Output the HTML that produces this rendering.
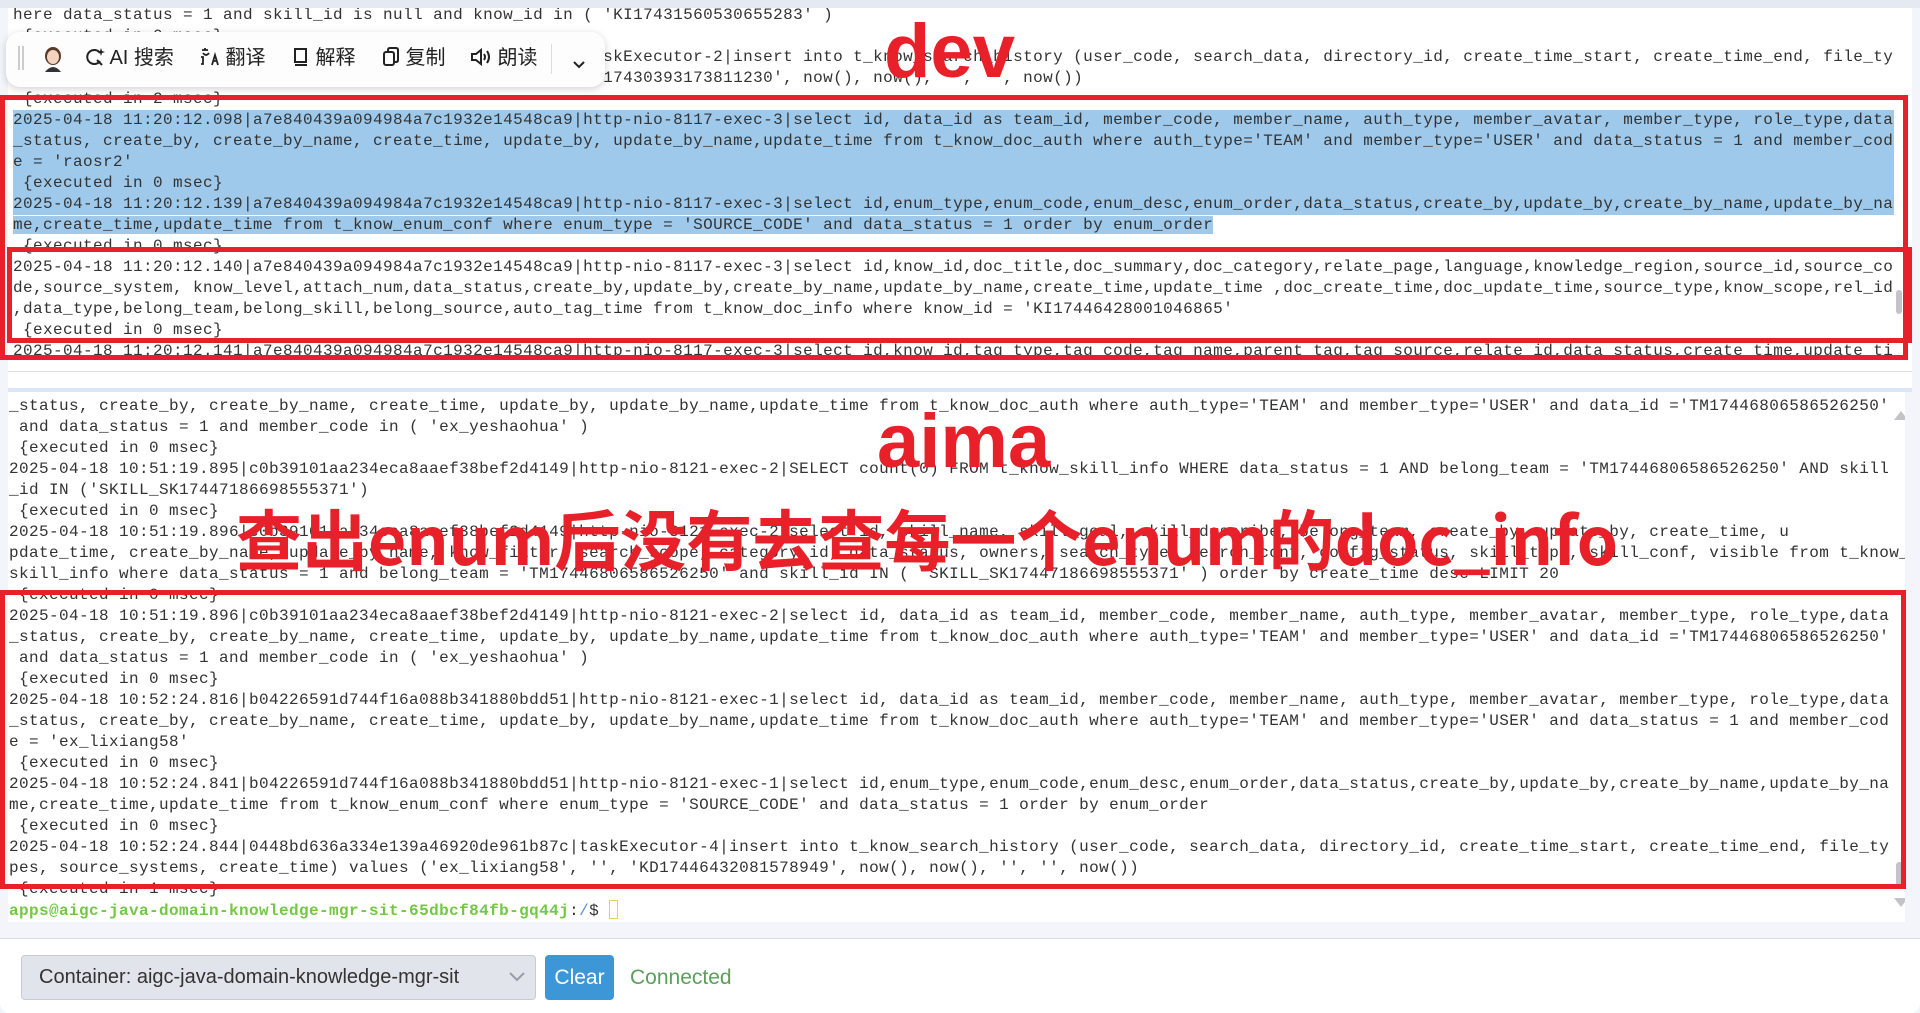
<!DOCTYPE html>
<html><head><meta charset="utf-8">
<style>
*{margin:0;padding:0;box-sizing:border-box}
body{width:1920px;height:1013px;overflow:hidden;background:#f4f5fa;position:relative;font-family:"Liberation Sans","Noto Sans CJK SC",sans-serif}
.pane{position:absolute;background:#fff;overflow:hidden}
.ln{font-family:"Liberation Mono",monospace;font-size:16px;letter-spacing:0.4px;line-height:21px;height:21px;white-space:pre;color:#333}
.hl{background:#9ec9ea}
.box{position:absolute;border:5px solid #e8202a}
.red{position:absolute;color:#e8202a;font-weight:bold;font-family:"Liberation Sans","Noto Sans CJK SC",sans-serif;white-space:nowrap}
.tb{position:absolute;left:6px;top:32px;width:599px;height:55px;background:#fdfdfd;border-radius:14px;box-shadow:0 2px 8px rgba(0,0,0,.18);font-size:20px;color:#222}
.tb span{position:absolute;top:14px;line-height:24px;white-space:nowrap}
</style></head><body>
<div style="position:absolute;left:0;top:0;width:1920px;height:8px;background:#e4e9f2"></div>
<div class="pane" style="left:8px;top:8px;width:1904px;height:380px;padding-left:5px">
<div style="margin-top:-3px">
<div class="ln">here data_status = 1 and skill_id is null and know_id in ( 'KI17431560530655283' )</div>
<div class="ln"> {executed in 0 msec}</div>
<div class="ln">2025-04-18 11:20:12.087|a7e840439a094984a7c1932e14548ca9|taskExecutor-2|insert into t_know_search_history (user_code, search_data, directory_id, create_time_start, create_time_end, file_ty</div>
<div class="ln">pes, source_systems, create_time) values ('raosr2', '', 'KD17430393173811230', now(), now(), '', '', now())</div>
<div class="ln"> {executed in 2 msec}</div>
<div class="ln hl" style="width:1881px">2025-04-18 11:20:12.098|a7e840439a094984a7c1932e14548ca9|http-nio-8117-exec-3|select id, data_id as team_id, member_code, member_name, auth_type, member_avatar, member_type, role_type,data</div>
<div class="ln hl" style="width:1881px">_status, create_by, create_by_name, create_time, update_by, update_by_name,update_time from t_know_doc_auth where auth_type='TEAM' and member_type='USER' and data_status = 1 and member_cod</div>
<div class="ln hl" style="width:1881px">e = 'raosr2'</div>
<div class="ln hl" style="width:1881px"> {executed in 0 msec}</div>
<div class="ln hl" style="width:1881px">2025-04-18 11:20:12.139|a7e840439a094984a7c1932e14548ca9|http-nio-8117-exec-3|select id,enum_type,enum_code,enum_desc,enum_order,data_status,create_by,update_by,create_by_name,update_by_na</div>
<div class="ln"><span class="hl">me,create_time,update_time from t_know_enum_conf where enum_type = 'SOURCE_CODE' and data_status = 1 order by enum_order</span></div>
<div class="ln"> {executed in 0 msec}</div>
<div class="ln">2025-04-18 11:20:12.140|a7e840439a094984a7c1932e14548ca9|http-nio-8117-exec-3|select id,know_id,doc_title,doc_summary,doc_category,relate_page,language,knowledge_region,source_id,source_co</div>
<div class="ln">de,source_system, know_level,attach_num,data_status,create_by,update_by,create_by_name,update_by_name,create_time,update_time ,doc_create_time,doc_update_time,source_type,know_scope,rel_id</div>
<div class="ln">,data_type,belong_team,belong_skill,belong_source,auto_tag_time from t_know_doc_info where know_id = 'KI17446428001046865'</div>
<div class="ln"> {executed in 0 msec}</div>
<div class="ln">2025-04-18 11:20:12.141|a7e840439a094984a7c1932e14548ca9|http-nio-8117-exec-3|select id,know_id,tag_type,tag_code,tag_name,parent_tag,tag_source,relate_id,data_status,create_time,update_ti</div>
</div>
<div style="position:absolute;left:0;top:363px;width:1904px;height:17px;background:#fff;border-top:1px solid #dde0e8"></div>
<div style="position:absolute;left:1888px;top:282px;width:6px;height:24px;background:#c4c4c8;border-radius:3px"></div>
</div>
<div style="position:absolute;left:8px;top:388px;width:1904px;height:4px;background:#dbe6f6"></div>

<div class="pane" style="left:8px;top:392px;width:1897px;height:530px;padding-left:1px">
<div style="margin-top:4px">
<div class="ln">_status, create_by, create_by_name, create_time, update_by, update_by_name,update_time from t_know_doc_auth where auth_type='TEAM' and member_type='USER' and data_id ='TM17446806586526250'</div>
<div class="ln"> and data_status = 1 and member_code in ( 'ex_yeshaohua' )</div>
<div class="ln"> {executed in 0 msec}</div>
<div class="ln">2025-04-18 10:51:19.895|c0b39101aa234eca8aaef38bef2d4149|http-nio-8121-exec-2|SELECT count(0) FROM t_know_skill_info WHERE data_status = 1 AND belong_team = 'TM17446806586526250' AND skill</div>
<div class="ln">_id IN ('SKILL_SK17447186698555371')</div>
<div class="ln"> {executed in 0 msec}</div>
<div class="ln">2025-04-18 10:51:19.896|c0b39101aa234eca8aaef38bef2d4149|http-nio-8121-exec-2|select id, skill_name, skill_goal, skill_describe, belong_team, create_by, update_by, create_time, u</div>
<div class="ln">pdate_time, create_by_name, update_by_name, know_filter, search_scope, category_id, data_status, owners, search_type, search_conf, config_status, skill_type, skill_conf, visible from t_know_</div>
<div class="ln">skill_info where data_status = 1 and belong_team = 'TM17446806586526250' and skill_id IN ( 'SKILL_SK17447186698555371' ) order by create_time desc LIMIT 20</div>
<div class="ln"> {executed in 0 msec}</div>
<div class="ln">2025-04-18 10:51:19.896|c0b39101aa234eca8aaef38bef2d4149|http-nio-8121-exec-2|select id, data_id as team_id, member_code, member_name, auth_type, member_avatar, member_type, role_type,data</div>
<div class="ln">_status, create_by, create_by_name, create_time, update_by, update_by_name,update_time from t_know_doc_auth where auth_type='TEAM' and member_type='USER' and data_id ='TM17446806586526250'</div>
<div class="ln"> and data_status = 1 and member_code in ( 'ex_yeshaohua' )</div>
<div class="ln"> {executed in 0 msec}</div>
<div class="ln">2025-04-18 10:52:24.816|b04226591d744f16a088b341880bdd51|http-nio-8121-exec-1|select id, data_id as team_id, member_code, member_name, auth_type, member_avatar, member_type, role_type,data</div>
<div class="ln">_status, create_by, create_by_name, create_time, update_by, update_by_name,update_time from t_know_doc_auth where auth_type='TEAM' and member_type='USER' and data_status = 1 and member_cod</div>
<div class="ln">e = 'ex_lixiang58'</div>
<div class="ln"> {executed in 0 msec}</div>
<div class="ln">2025-04-18 10:52:24.841|b04226591d744f16a088b341880bdd51|http-nio-8121-exec-1|select id,enum_type,enum_code,enum_desc,enum_order,data_status,create_by,update_by,create_by_name,update_by_na</div>
<div class="ln">me,create_time,update_time from t_know_enum_conf where enum_type = 'SOURCE_CODE' and data_status = 1 order by enum_order</div>
<div class="ln"> {executed in 0 msec}</div>
<div class="ln">2025-04-18 10:52:24.844|0448bd636a334e139a46920de961b87c|taskExecutor-4|insert into t_know_search_history (user_code, search_data, directory_id, create_time_start, create_time_end, file_ty</div>
<div class="ln">pes, source_systems, create_time) values ('ex_lixiang58', '', 'KD17446432081578949', now(), now(), '', '', now())</div>
<div class="ln"> {executed in 1 msec}</div>
<div class="ln"><span style="color:#72c842;font-weight:bold">apps@aigc-java-domain-knowledge-mgr-sit-65dbcf84fb-gq44j</span>:<span style="color:#5b8fd6">/</span>$ <span style="display:inline-block;width:9px;height:19px;border:1.5px solid #e8d060;vertical-align:-4px"></span></div>
</div>
<svg style="position:absolute;left:1886px;top:18px" width="14" height="10"><path d="M0 10 L7 1 L14 10 Z" fill="#c4c4c8"/></svg>
<div style="position:absolute;left:1888px;top:470px;width:7px;height:24px;background:#c4c4c8;border-radius:3px"></div>
<svg style="position:absolute;left:1886px;top:506px" width="14" height="10"><path d="M0 0 L7 9 L14 0 Z" fill="#c4c4c8"/></svg>
</div>

<div style="position:absolute;left:0;top:938px;width:1920px;height:75px;background:#fff;border-top:1px solid #dcdde3;border-radius:0 0 10px 10px"></div>
<div style="position:absolute;left:21px;top:955px;width:515px;height:45px;background:#e2e4ec;border:1px solid #c8cad4;border-radius:4px;font-size:20px;color:#333;line-height:43px;padding-left:17px">Container: aigc-java-domain-knowledge-mgr-sit
<svg style="position:absolute;left:486px;top:15px" width="18" height="12"><path d="M2 2 L9 9 L16 2" stroke="#9a9ca6" stroke-width="2" fill="none"/></svg></div>
<div style="position:absolute;left:545px;top:955px;width:69px;height:45px;background:#3d97d6;border-radius:4px;color:#fff;font-size:21px;line-height:45px;text-align:center">Clear</div>
<div style="position:absolute;left:630px;top:955px;height:45px;line-height:45px;font-size:21px;color:#5c9e5c">Connected</div>

<div class="box" style="left:0;top:95px;width:1908px;height:265px"></div>
<div class="box" style="left:7px;top:247px;width:1905px;height:96px"></div>
<div class="box" style="left:0;top:590px;width:1906px;height:299px"></div>

<div class="tb">
<span style="left:12px;top:14px;width:6px;height:24px;border-left:2px solid #ccc;border-right:2px solid #ccc"></span>
<span style="left:37px;top:14px;width:20px;height:26px">
<svg width="20" height="26" viewBox="0 0 20 26"><ellipse cx="10" cy="10" rx="8" ry="9" fill="#5a3a2a"/><ellipse cx="10" cy="11" rx="6" ry="7" fill="#f4d4c0"/><path d="M2 26 Q10 16 18 26Z" fill="#333"/></svg></span>
<span style="left:79px"><svg width="20" height="20" viewBox="0 0 20 20" style="vertical-align:-3px"><path d="M15 6 A7 7 0 1 0 15 14" stroke="#222" stroke-width="2" fill="none"/><path d="M12 13 L17 18" stroke="#222" stroke-width="2"/><path d="M16 1 L17 4 L20 5 L17 6 L16 9 L15 6 L12 5 L15 4Z" fill="#222"/></svg> AI 搜索</span>
<span style="left:194px"><svg width="20" height="20" viewBox="0 0 20 20" style="vertical-align:-3px"><path d="M2 3 L8 3 M5 3 L5 1 M3 6 Q6 10 9 6 M1 10 L3 10 L3 17 L1 17 M12 18 L15 8 L18 18 M13 14 L17 14" stroke="#222" stroke-width="1.8" fill="none"/></svg> 翻译</span>
<span style="left:286px"><svg width="18" height="20" viewBox="0 0 18 20" style="vertical-align:-3px"><rect x="3" y="2" width="11" height="13" stroke="#222" stroke-width="2" fill="none"/><path d="M3 18 L15 18" stroke="#222" stroke-width="2"/></svg> 解释</span>
<span style="left:376px"><svg width="18" height="20" viewBox="0 0 18 20" style="vertical-align:-3px"><rect x="2" y="5" width="10" height="13" rx="2" stroke="#222" stroke-width="2" fill="none"/><path d="M6 5 V3 Q6 1 8 1 H14 Q16 1 16 3 V13 Q16 15 14 15 H12" stroke="#222" stroke-width="2" fill="none"/></svg> 复制</span>
<span style="left:464px"><svg width="22" height="20" viewBox="0 0 22 20" style="vertical-align:-3px"><path d="M2 7 H6 L11 3 V17 L6 13 H2Z" stroke="#222" stroke-width="2" fill="none"/><path d="M14 7 Q16 10 14 13 M17 4 Q21 10 17 16" stroke="#222" stroke-width="2" fill="none"/></svg> 朗读</span>
<span style="left:545px;top:12px;width:1px;height:30px;background:#ddd"></span>
<span style="left:566px;top:20px"><svg width="14" height="10"><path d="M2 2 L7 7 L12 2" stroke="#222" stroke-width="2" fill="none"/></svg></span>
</div>

<div class="red" style="left:884px;top:14px;font-size:76px;line-height:76px">dev</div>
<div class="red" style="left:877px;top:404px;font-size:76px;line-height:76px">aima</div>
<div class="red" style="left:236px;top:497px;font-size:66px;line-height:80px;font-family:'Noto Sans CJK SC','Liberation Sans',sans-serif">查出enum后没有去查每一个enum的doc_info</div>
</body></html>
